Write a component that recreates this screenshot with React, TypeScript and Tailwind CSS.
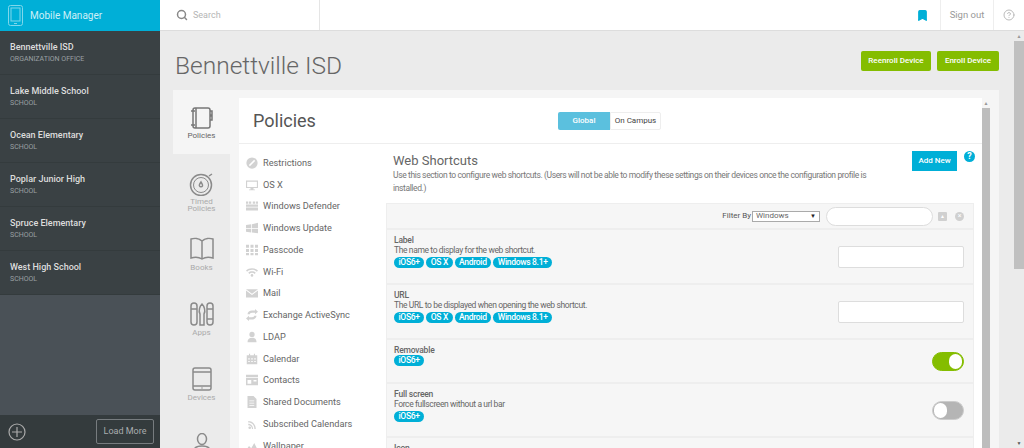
import { Bookmark, CircleHelp, Search } from 'lucide-react';
import type { ReactNode } from 'react';

const schools = [
  { name: 'Bennettville ISD', type: 'ORGANIZATION OFFICE' },
  { name: 'Lake Middle School', type: 'SCHOOL' },
  { name: 'Ocean Elementary', type: 'SCHOOL' },
  { name: 'Poplar Junior High', type: 'SCHOOL' },
  { name: 'Spruce Elementary', type: 'SCHOOL' },
  { name: 'West High School', type: 'SCHOOL' },
];

function Svg({ children, w, h }: { children: ReactNode; w: number; h: number }) {
  return (
    <svg width={w} height={h} viewBox={`0 0 ${w} ${h}`} fill="none" stroke="currentColor" strokeWidth="1.5" className="shrink-0">
      {children}
    </svg>
  );
}

// side tab icons
const tabs: { label?: ReactNode; icon: ReactNode; h: string; labelGap?: string; active?: boolean }[] = [
  {
    label: 'Policies',
    active: true,
    h: 'h-[63px] pt-[16px]',
    icon: (
      <Svg w={22} h={22}>
        <rect x="2" y="1" width="17" height="20" rx="2" />
        <path d="M5 1v20M0 4h4M0 18h4M19 4h2v4h-2M19 9h2v4h-2" />
      </Svg>
    ),
  },
  {
    label: <>Timed<br />Policies</>,
    labelGap: 'mt-[2px]',
    h: 'h-[65px] pt-[18px]',
    icon: (
      <Svg w={28} h={24}>
        <circle cx="13" cy="13" r="10.500" />
        <circle cx="13" cy="13" r="7.500" strokeWidth="1" />
        <path d="M13 10c-1.500 2-2 3-1.500 4s2.500 1 3 0-.5-2-1.500-4zM21 4l3-2" />
      </Svg>
    ),
  },
  {
    label: 'Books',
    h: 'h-[65px] pt-[18px]',
    icon: (
      <Svg w={24} h={24}>
        <path d="M12 4C9 1 4 1 1 2v19c3-1 8-1 11 1 3-2 8-2 11-1V2c-3-1-8-1-11 2zM12 4v18" />
      </Svg>
    ),
  },
  {
    label: 'Apps',
    h: 'h-[65px] pt-[18px]',
    icon: (
      <Svg w={24} h={24}>
        <rect x="1" y="1" width="6" height="22" rx="3" />
        <rect x="17" y="1" width="6" height="22" rx="3" />
        <path d="M1 7h6M17 7h6M17 17h6M10 12v11h4V12c2-3 0-8-2-10-2 2-4 7-2 10z" />
      </Svg>
    ),
  },
  {
    label: 'Devices',
    h: 'h-[65px] pt-[18px]',
    icon: (
      <Svg w={20} h={24}>
        <rect x="1" y="1" width="18" height="22" rx="2" />
        <path d="M1 5h18M1 19h18M9.500 21h1" />
      </Svg>
    ),
  },
  {
    h: 'h-[34px] pt-[19px]',
    icon: (
      <Svg w={18} h={24}>
        <ellipse cx="9" cy="6" rx="4.500" ry="5.500" />
        <path d="M1 23v-5c0-3 3-5 8-5s8 2 8 5v5z" />
      </Svg>
    ),
  },
];

// policy nav glyphs, filled in the grey of the reference
const navIcons: Record<string, ReactNode> = {
  Restrictions: (
    <>
      <circle cx="8" cy="8" r="7.500" />
      <path d="M4.500 11.500l7-7" stroke="#fff" strokeWidth="2" />
    </>
  ),
  'OS X': <path d="M0 2h16v10H10v2h2v1H4v-1h2v-2H0zM1.500 3.500v7h13v-7z" fillRule="evenodd" />,
  'Windows Defender': <path d="M0 2h3v3H0zM4 2h3v3H4zM9 2h3v3H9zM13 2h3v3h-3zM0 6h16v3H0zM0 10h16v4H0z" />,
  'Windows Update': <path d="M0 4l7-1v5H0zM8 3l8-2v7H8zM0 9h7v5l-7-1zM8 9h8v6l-8-1z" />,
  Passcode: <path d="M0 1h4v4H0zM6 1h4v4H6zM12 1h4v4h-4zM0 6.500h4v4H0zM6 6.500h4v4H6zM12 6.500h4v4h-4zM0 12h4v3H0zM6 12h4v3H6zM12 12h4v3h-4z" />,
  'Wi-Fi': (
    <>
      <path d="M8 3c3 0 6 1 8 3l-1.500 1.500C13 6 10.500 5 8 5S3 6 1.500 7.500L0 6c2-2 5-3 8-3z" />
      <path d="M8 7c2 0 3.500.6 5 2l-1.500 1.500C10.500 9.500 9.300 9 8 9s-2.500.5-3.500 1.500L3 9c1.500-1.400 3-2 5-2z" />
      <circle cx="8" cy="12.500" r="1.700" />
    </>
  ),
  Mail: <path d="M0 3h16L8 9zM0 4.500l8 6 8-6V14H0z" />,
  'Exchange ActiveSync': <path d="M2 7c0-3 3-5 6-5h4V0l4 3.500L12 7V5H8C6 5 5 6 5 7zM14 9c0 3-3 5-6 5H4v2l-4-3.500L4 9v2h4c2 0 3-1 3-2z" />,
  LDAP: (
    <>
      <circle cx="8" cy="4.500" r="3.500" />
      <path d="M2 15c0-4 2-6 6-6s6 2 6 6z" />
    </>
  ),
  Calendar: <path d="M4 1h1.500v2H4zM10.500 1H12v2h-1.500zM1 3h14v12H1zM3 7v1.500h2V7zM7 7v1.500h2V7zM11 7v1.500h2V7zM3 10.500V12h2v-1.500zM7 10.500V12h2v-1.500zM11 10.500V12h2v-1.500z" fillRule="evenodd" />,
  Contacts: <path d="M0 1h16v3H0zM0 5h16v10H0zM2 8v5h5V8zM10 8v2h4V8z" fillRule="evenodd" />,
  'Shared Documents': <path d="M2 0h8l4 4v12H2zM4.500 6v1H11V6zM4.500 9v1H11V9zM4.500 12v1H11v-1z" fillRule="evenodd" />,
  'Subscribed Calendars': (
    <>
      <circle cx="5" cy="13" r="1.800" />
      <path d="M3 7.500c3.500 0 6.500 3 6.500 7H8c0-3-2-5-5-5zM3 4c5.500 0 10 4.500 10 10.500h-1.800C11.200 9.500 8 6 3 6z" />
    </>
  ),
  Wallpaper: <path d="M0 14l4-6 3 3 4-7 5 10z" />,
};

const policyNav = Object.keys(navIcons);

function Pill({ children }: { children: ReactNode }) {
  return (
    <span className="h-[11px] rounded-full bg-[#00afd7] px-[4.500px] text-[8.500px] leading-[11px] font-medium tracking-[-0.3px] text-white">
      {children}
    </span>
  );
}

function AllPills() {
  return (
    <div className="mt-[2px] flex gap-[2px]">
      <Pill>iOS6+</Pill>
      <Pill>OS X</Pill>
      <Pill>Android</Pill>
      <Pill>Windows 8.1+</Pill>
    </div>
  );
}

function Row({ title, desc, h, pills, control }: { title: string; desc?: string; h: string; pills: ReactNode; control?: ReactNode }) {
  return (
    <div className={`flex items-center justify-between border-b-2 border-[#eeeeee] pr-[9px] pl-[7px] ${h}`}>
      <div className="self-start pt-[5px]">
        <div className="text-[8.500px] leading-[10px] font-medium tracking-[-0.2px] text-[#666]">{title}</div>
        {desc && <div className="text-[8.500px] leading-[10px] tracking-[-0.38px] text-[#666]">{desc}</div>}
        {pills}
      </div>
      {control}
    </div>
  );
}

function TextBox() {
  return <div className="h-[22px] w-[126px] rounded-[2px] border border-[#dddddd] bg-white" />;
}

function Toggle({ on }: { on: boolean }) {
  return (
    <div className={`flex h-[19px] w-[32px] items-center rounded-full border px-px ${on ? 'justify-end border-[#84bd00] bg-[#84bd00]' : 'justify-start border-[#cccccc] bg-[#b5b5b5]'}`}>
      <div className="h-[15px] w-[13px] rounded-full bg-white" />
    </div>
  );
}

export default function App() {
  return (
    <div className="flex h-[448px] w-[1024px] overflow-hidden bg-[#ebebeb] font-['Roboto',sans-serif] text-[#666]">
      {/* org sidebar */}
      <aside className="flex w-[160px] shrink-0 flex-col bg-[#4a5157]">
        <div className="flex h-[31px] items-center gap-[7px] bg-[#00afd7] pl-[8px] text-white">
          <svg width="15" height="21" viewBox="0 0 15 21" fill="none" stroke="#7fd7eb" strokeWidth="1">
            <rect x="0.500" y="0.500" width="14" height="20" rx="2" />
            <rect x="3" y="3" width="9" height="13" />
            <path d="M6 18.500h3" />
          </svg>
          <span className="text-[10px] text-[#cdeff7]">Mobile Manager</span>
        </div>
        {schools.map((s) => (
          <div key={s.name} className="flex h-[44px] flex-col justify-center border-b border-[#343b3d] bg-[#3a4144] pb-px pl-[10px]">
            <div className="text-[9px] leading-[14px] font-medium text-[#dddddd]">{s.name}</div>
            <div className="text-[7px] leading-[10px] text-[#9aa0a3]">{s.type}</div>
          </div>
        ))}
        <div className="flex-1" />
        <div className="flex h-[33px] items-center justify-between bg-[#343b3d] pr-[6px] pl-[8px]">
          <svg width="18" height="18" viewBox="0 0 18 18" fill="none" stroke="#aaaaaa" strokeWidth="1.200">
            <circle cx="9" cy="9" r="8" />
            <path d="M9 4v10M4 9h10" />
          </svg>
          <div className="flex h-[25px] w-[58px] items-center justify-center rounded-[2px] border border-[#777c7f] text-[9px] text-[#a9adaf]">Load More</div>
        </div>
      </aside>

      <div className="flex min-w-0 flex-1 flex-col">
        {/* top bar */}
        <header className="flex h-[31px] shrink-0 items-center border-b border-[#dddddd] bg-white">
          <div className="flex h-full w-[160px] items-center gap-[5px] border-r border-[#e5e5e5] pl-[16px]">
            <Search size={12} strokeWidth={3} className="text-[#888]" />
            <span className="mt-px text-[9px] text-[#b5b5b5]">Search</span>
          </div>
          <div className="flex-1" />
          <Bookmark size={13} className="mr-[11px] fill-[#00afd7] text-[#00afd7]" />
          <div className="flex h-full w-[54px] items-center justify-center border-x border-[#eeeeee] text-[9.500px] text-[#999]">Sign out</div>
          <div className="flex w-[30px] items-center justify-center">
            <CircleHelp size={12} className="text-[#bbb]" />
          </div>
        </header>

        <div className="flex min-h-0 flex-1">
          <main className="flex min-w-0 flex-1 flex-col pr-[15px] pl-[13px]">
            <div className="flex h-[59px] shrink-0 items-center justify-between pl-[2px]">
              <h1 className="pt-[12px] text-[24.500px] font-light text-[#666]">Bennettville ISD</h1>
              <div className="flex gap-[6px]">
                <button className="h-[20px] w-[70px] rounded-[2px] bg-[#84bd00] text-[8px] font-medium text-white">Reenroll Device</button>
                <button className="h-[20px] w-[62px] rounded-[2px] bg-[#84bd00] text-[8px] font-medium text-white">Enroll Device</button>
              </div>
            </div>

            <div className="flex min-h-0 flex-1 border-t border-[#f5f5f5]">
              {/* icon tabs */}
              <div className="w-[57px] shrink-0 overflow-hidden">
                {tabs.map((t, i) => (
                  <div key={i} className={`flex flex-col items-center overflow-hidden ${t.h} ${t.active ? 'bg-[#f5f5f5] text-[#777]' : 'text-[#8a8a8a]'}`}>
                    {t.icon}
                    {t.label && <div className={`${t.labelGap ?? 'mt-[3px]'} text-center text-[8px] leading-[7px] ${t.active ? 'text-[#666]' : 'text-[#aaa]'}`}>{t.label}</div>}
                  </div>
                ))}
              </div>

              {/* policies card */}
              <div className="flex min-w-0 flex-1 flex-col bg-[#f5f5f5] pt-[7px] pr-[9px] pl-[9px]">
                <div className="flex min-h-0 flex-1 bg-white">
                  <div className="flex min-w-0 flex-1 flex-col">
                    <div className="flex h-[46px] shrink-0 items-center border-b border-[#eeeeee] pl-[14px]">
                      <span className="w-[305px] text-[18px] text-[#555]">Policies</span>
                      <div className="flex h-[18px] text-[8px] leading-[18px]">
                        <div className="w-[52px] rounded-l-[2px] bg-[#5bc0de] text-center font-medium text-white">Global</div>
                        <div className="w-[51px] rounded-r-[2px] border border-[#eeeeee] text-center leading-[16px] text-[#444]">On Campus</div>
                      </div>
                    </div>

                    <div className="flex min-h-0 flex-1">
                      <nav className="w-[147px] shrink-0 overflow-hidden pt-[8px] pl-[7px]">
                        {policyNav.map((n) => (
                          <div key={n} className="flex h-[21.750px] items-center gap-[5px] text-[9.200px] text-[#666]">
                            <svg width="12" height="12" viewBox="0 0 16 16" fill="#d2d2d2" className="shrink-0">
                              {navIcons[n]}
                            </svg>
                            {n}
                          </div>
                        ))}
                      </nav>

                      <div className="min-w-0 flex-1 overflow-hidden">
                        <div className="relative h-[59px] pt-[9px] pl-[7px]">
                          <h2 className="text-[13px] leading-[16px] text-[#666]">Web Shortcuts</h2>
                          <p className="w-[490px] text-[8.500px] leading-[12.500px] tracking-[-0.38px] text-[#777]">
                            Use this section to configure web shortcuts. (Users will not be able to modify these settings on their devices once the configuration profile is installed.)
                          </p>
                          <button className="absolute top-[7px] right-[25px] h-[20px] w-[45px] bg-[#00afd7] text-[8px] font-medium text-white">Add New</button>
                          <div className="absolute top-[7px] right-[7px] flex h-[11px] w-[11px] items-center justify-center rounded-full bg-[#00afd7] text-[9px] leading-none font-bold text-white">?</div>
                        </div>

                        <div className="mr-[8px] border border-[#eeeeee] bg-[#f6f6f6]">
                          <div className="flex h-[26px] items-center justify-end gap-[1px] border-b-2 border-[#eeeeee] pr-[9px] text-[8px]">
                            <span className="text-[#555]">Filter By</span>
                            <div className="flex h-[11px] w-[68px] items-center justify-between border border-[#aaaaaa] bg-white px-[3px] leading-none text-[#666]">
                              Windows<span className="text-[6px] text-[#222]">▼</span>
                            </div>
                            <div className="ml-[5px] h-[19px] w-[107px] rounded-full border border-[#dddddd] bg-white" />
                            <div className="ml-[4px] flex h-[9px] w-[9px] items-center justify-center rounded-[1px] bg-[#d0d0d0] text-[5px] leading-none text-white">▲</div>
                            <div className="ml-[7px] flex h-[9px] w-[9px] items-center justify-center rounded-full bg-[#d0d0d0] text-[7px] leading-none text-white">×</div>
                          </div>
                          <Row title="Label" desc="The name to display for the web shortcut." h="h-[55px]" pills={<AllPills />} control={<TextBox />} />
                          <Row title="URL" desc="The URL to be displayed when opening the web shortcut." h="h-[55px]" pills={<AllPills />} control={<TextBox />} />
                          <Row title="Removable" h="h-[44px]" pills={<div className="flex"><Pill>iOS6+</Pill></div>} control={<Toggle on />} />
                          <Row title="Full screen" desc="Force fullscreen without a url bar" h="h-[54px]" pills={<div className="mt-[2px] flex"><Pill>iOS6+</Pill></div>} control={<Toggle on={false} />} />
                          <Row title="Icon" h="h-[30px]" pills={null} />
                        </div>
                      </div>
                    </div>
                  </div>

                  {/* inner scrollbar */}
                  <div className="flex w-[8px] shrink-0 flex-col bg-[#f5f5f5]">
                    <div className="flex h-[10px] items-center justify-center text-[5px] leading-none text-[#999]">▲</div>
                    <div className="flex-1 bg-[#bdbdbd]" />
                  </div>
                </div>
              </div>
            </div>
          </main>

          {/* page scrollbar */}
          <div className="flex w-[10px] shrink-0 flex-col">
            <div className="flex h-[10px] items-center justify-center text-[5px] leading-none text-[#999]">▲</div>
            <div className="h-[228px] bg-[#c0c0c0]" />
            <div className="flex-1" />
            <div className="flex h-[10px] items-center justify-center text-[5px] leading-none text-[#555]">▼</div>
          </div>
        </div>
      </div>
    </div>
  );
}
